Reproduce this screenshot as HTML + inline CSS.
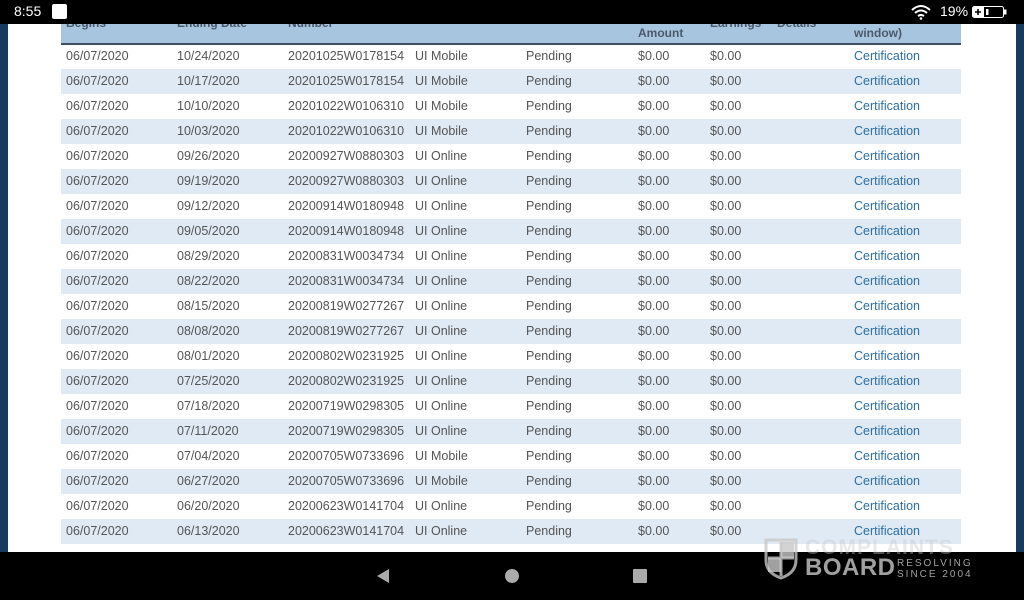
<!DOCTYPE html>
<html><head><meta charset="utf-8"><style>
*{margin:0;padding:0;box-sizing:border-box}
body{width:1024px;height:600px;overflow:hidden;background:#000;font-family:"Liberation Sans",Roboto,sans-serif;position:relative}
.sb{position:absolute;left:0;top:0;width:1024px;height:24px;background:#000;color:#fff;font-size:14px}
.side{position:absolute;top:24px;height:528px;width:8px;background:#173a60}
.page{position:absolute;left:8px;top:24px;width:1008px;height:528px;background:#fff;overflow:hidden}
table{position:absolute;left:53px;top:0;width:900px;border-collapse:collapse;font-size:12.5px;color:#555}
td{height:25px;padding:0 0 2px 5px;white-space:nowrap;vertical-align:middle}
tr:nth-child(odd) td{background:#dfeaf5}
tr.h td{height:20px;background:#a8c5df;border-bottom:2px solid #3e4f60;font-weight:bold;color:#4b5a6a;font-size:12px;vertical-align:bottom;padding-bottom:3px}
a{color:#2e6ea4;text-decoration:none}
.nav{position:absolute;left:0;top:552px;width:1024px;height:48px;background:#000}
.wm{position:absolute;left:763px;top:536px;color:rgba(200,200,200,.8);font-weight:bold}
</style></head><body>
<div class="sb"><span style="position:absolute;left:14px;top:3px">8:55</span><div style="position:absolute;left:52px;top:4px;width:15px;height:15px;background:#fff;border-radius:2px"></div>
<svg style="position:absolute;left:910px;top:4px" width="22" height="16" viewBox="0 0 22 16"><path d="M2 6Q11 -2 20 6" stroke="#fff" stroke-width="2" fill="none"/><path d="M5 9Q11 4 17 9" stroke="#fff" stroke-width="2" fill="none"/><path d="M8 12Q11 10 14 12" stroke="#fff" stroke-width="2" fill="none"/><circle cx="11" cy="14.5" r="1.3" fill="#fff"/></svg>
<span style="position:absolute;left:940px;top:3px">19%</span>
<svg style="position:absolute;left:972px;top:6px" width="35" height="12" viewBox="0 0 35 12"><rect x="0.5" y="0.5" width="31" height="11" rx="2" fill="none" stroke="#fff"/><rect x="1" y="1" width="11" height="10" fill="#fff"/><rect x="32" y="3.5" width="2.5" height="5" fill="#fff"/><path d="M3 6h6M6 3v6" stroke="#000" stroke-width="1.6"/><rect x="14" y="3" width="2.5" height="6" fill="#fff"/></svg>
</div>
<div class="side" style="left:0"></div><div class="side" style="left:1016px"></div>
<div class="page"><table>
<colgroup><col style="width:111px"><col style="width:111px"><col style="width:127px"><col style="width:111px"><col style="width:112px"><col style="width:72px"><col style="width:67px"><col style="width:77px"><col></colgroup>
<tr class="h"><td style="vertical-align:top;padding-top:0"><div style="margin-top:-8px">Begins</div></td><td style="vertical-align:top"><div style="margin-top:-8px">Ending Date</div></td><td style="vertical-align:top"><div style="margin-top:-8px">Number</div></td><td></td><td></td><td>Amount</td><td style="vertical-align:top"><div style="margin-top:-8px">Earnings</div></td><td style="vertical-align:top"><div style="margin-top:-8px">Details</div></td><td>window)</td></tr>
<tr><td>06/07/2020</td><td>10/24/2020</td><td>20201025W0178154</td><td>UI Mobile</td><td>Pending</td><td>$0.00</td><td>$0.00</td><td></td><td><a>Certification</a></td></tr>
<tr><td>06/07/2020</td><td>10/17/2020</td><td>20201025W0178154</td><td>UI Mobile</td><td>Pending</td><td>$0.00</td><td>$0.00</td><td></td><td><a>Certification</a></td></tr>
<tr><td>06/07/2020</td><td>10/10/2020</td><td>20201022W0106310</td><td>UI Mobile</td><td>Pending</td><td>$0.00</td><td>$0.00</td><td></td><td><a>Certification</a></td></tr>
<tr><td>06/07/2020</td><td>10/03/2020</td><td>20201022W0106310</td><td>UI Mobile</td><td>Pending</td><td>$0.00</td><td>$0.00</td><td></td><td><a>Certification</a></td></tr>
<tr><td>06/07/2020</td><td>09/26/2020</td><td>20200927W0880303</td><td>UI Online</td><td>Pending</td><td>$0.00</td><td>$0.00</td><td></td><td><a>Certification</a></td></tr>
<tr><td>06/07/2020</td><td>09/19/2020</td><td>20200927W0880303</td><td>UI Online</td><td>Pending</td><td>$0.00</td><td>$0.00</td><td></td><td><a>Certification</a></td></tr>
<tr><td>06/07/2020</td><td>09/12/2020</td><td>20200914W0180948</td><td>UI Online</td><td>Pending</td><td>$0.00</td><td>$0.00</td><td></td><td><a>Certification</a></td></tr>
<tr><td>06/07/2020</td><td>09/05/2020</td><td>20200914W0180948</td><td>UI Online</td><td>Pending</td><td>$0.00</td><td>$0.00</td><td></td><td><a>Certification</a></td></tr>
<tr><td>06/07/2020</td><td>08/29/2020</td><td>20200831W0034734</td><td>UI Online</td><td>Pending</td><td>$0.00</td><td>$0.00</td><td></td><td><a>Certification</a></td></tr>
<tr><td>06/07/2020</td><td>08/22/2020</td><td>20200831W0034734</td><td>UI Online</td><td>Pending</td><td>$0.00</td><td>$0.00</td><td></td><td><a>Certification</a></td></tr>
<tr><td>06/07/2020</td><td>08/15/2020</td><td>20200819W0277267</td><td>UI Online</td><td>Pending</td><td>$0.00</td><td>$0.00</td><td></td><td><a>Certification</a></td></tr>
<tr><td>06/07/2020</td><td>08/08/2020</td><td>20200819W0277267</td><td>UI Online</td><td>Pending</td><td>$0.00</td><td>$0.00</td><td></td><td><a>Certification</a></td></tr>
<tr><td>06/07/2020</td><td>08/01/2020</td><td>20200802W0231925</td><td>UI Online</td><td>Pending</td><td>$0.00</td><td>$0.00</td><td></td><td><a>Certification</a></td></tr>
<tr><td>06/07/2020</td><td>07/25/2020</td><td>20200802W0231925</td><td>UI Online</td><td>Pending</td><td>$0.00</td><td>$0.00</td><td></td><td><a>Certification</a></td></tr>
<tr><td>06/07/2020</td><td>07/18/2020</td><td>20200719W0298305</td><td>UI Online</td><td>Pending</td><td>$0.00</td><td>$0.00</td><td></td><td><a>Certification</a></td></tr>
<tr><td>06/07/2020</td><td>07/11/2020</td><td>20200719W0298305</td><td>UI Online</td><td>Pending</td><td>$0.00</td><td>$0.00</td><td></td><td><a>Certification</a></td></tr>
<tr><td>06/07/2020</td><td>07/04/2020</td><td>20200705W0733696</td><td>UI Mobile</td><td>Pending</td><td>$0.00</td><td>$0.00</td><td></td><td><a>Certification</a></td></tr>
<tr><td>06/07/2020</td><td>06/27/2020</td><td>20200705W0733696</td><td>UI Mobile</td><td>Pending</td><td>$0.00</td><td>$0.00</td><td></td><td><a>Certification</a></td></tr>
<tr><td>06/07/2020</td><td>06/20/2020</td><td>20200623W0141704</td><td>UI Online</td><td>Pending</td><td>$0.00</td><td>$0.00</td><td></td><td><a>Certification</a></td></tr>
<tr><td>06/07/2020</td><td>06/13/2020</td><td>20200623W0141704</td><td>UI Online</td><td>Pending</td><td>$0.00</td><td>$0.00</td><td></td><td><a>Certification</a></td></tr>
</table></div>
<div class="nav">
<svg style="position:absolute;left:375px;top:16px" width="16" height="16"><path d="M14 1L2 8L14 15Z" fill="#aaa"/></svg>
<svg style="position:absolute;left:504px;top:16px" width="16" height="16"><circle cx="8" cy="8" r="7" fill="#aaa"/></svg>
<svg style="position:absolute;left:632px;top:16px" width="16" height="16"><rect x="1" y="1" width="14" height="14" rx="1" fill="#aaa"/></svg>
</div>
<div class="wm">
<svg style="position:absolute;left:0;top:0" width="36" height="44" viewBox="0 0 36 44"><path d="M3 4H33V24Q33 37 18 42Q3 37 3 24Z" fill="none" stroke="rgba(200,200,200,.8)" stroke-width="3"/><path d="M18 6V40M5 22H31" stroke="rgba(200,200,200,.8)" stroke-width="3"/><rect x="5" y="22" width="13" height="14" fill="rgba(200,200,200,.8)"/><rect x="18" y="6" width="13" height="16" fill="rgba(200,200,200,.8)"/></svg>
<div style="position:absolute;left:42px;top:0;font-size:21px;letter-spacing:1px;opacity:.5">COMPLAINTS</div>
<div style="position:absolute;left:42px;top:18px;font-size:24px;letter-spacing:0.5px;white-space:nowrap">BOARD</div>
<div style="position:absolute;left:134px;top:22px;font-size:10px;letter-spacing:2px;line-height:11px;font-weight:normal;white-space:nowrap">RESOLVING<br>SINCE 2004</div>
</div>
</body></html>
